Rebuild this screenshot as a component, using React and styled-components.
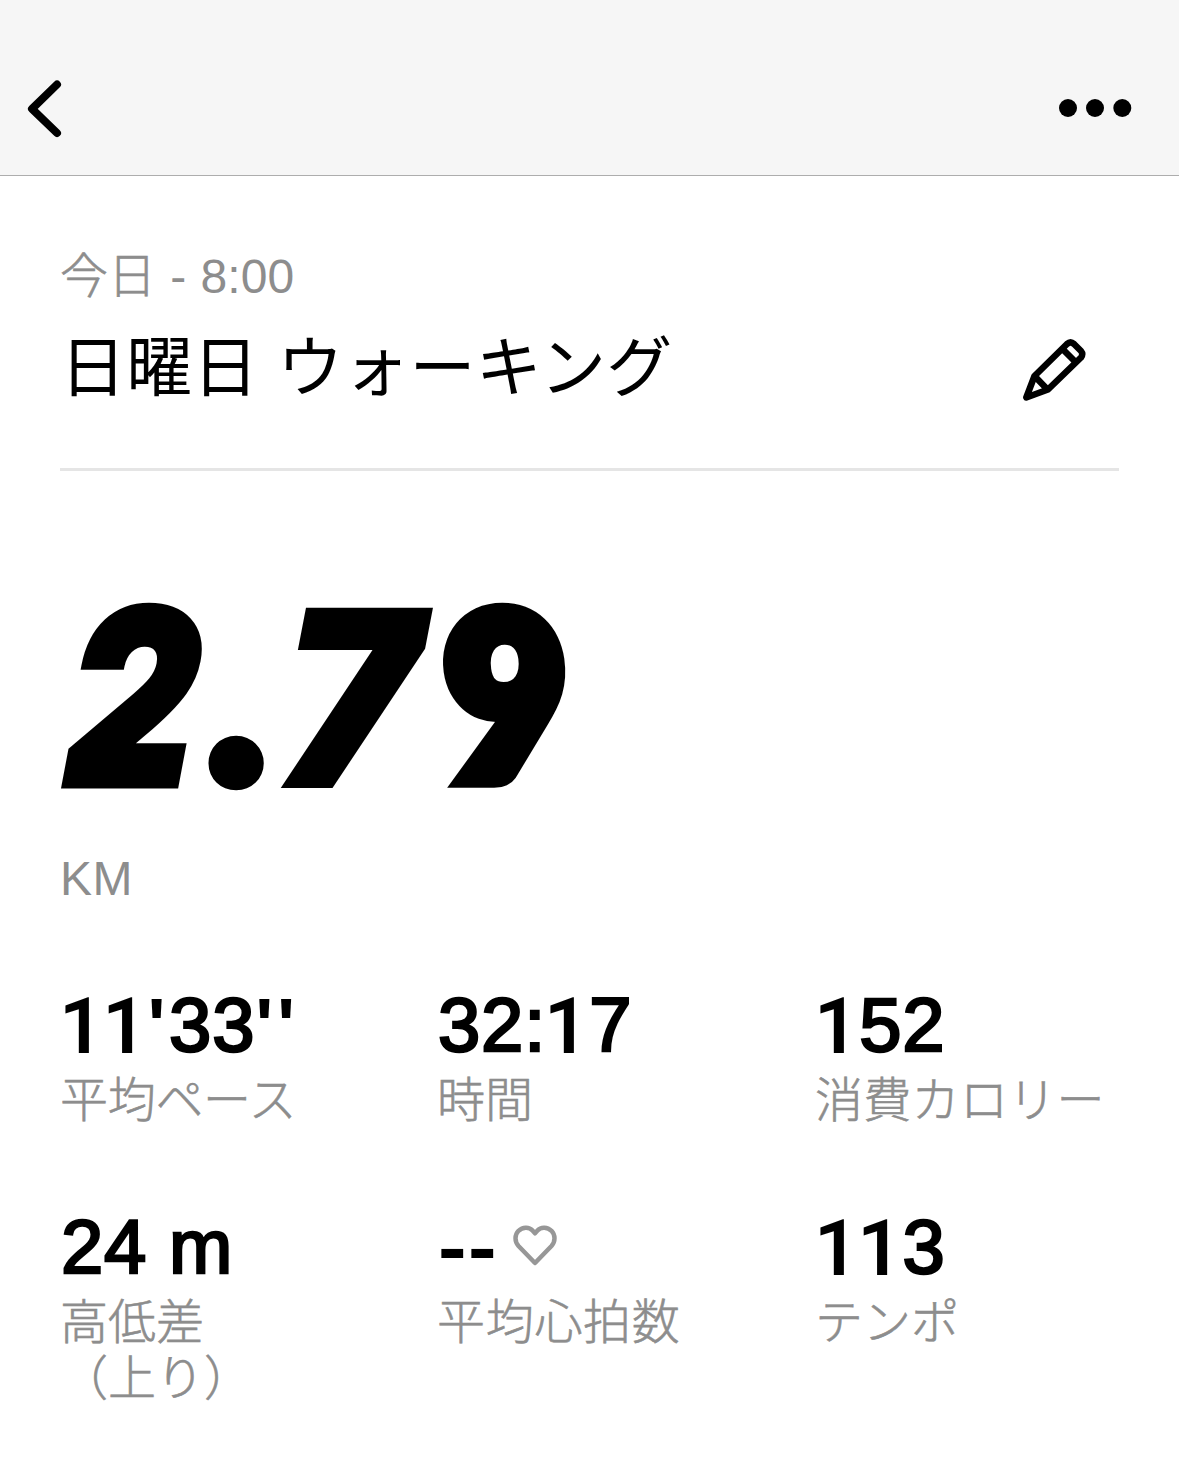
import styled, { createGlobalStyle } from "styled-components";

const GlobalStyle = createGlobalStyle`
  * {
    box-sizing: border-box;
  }

  body {
    margin: 0;
    background: #fff;
    color: #000;
    font-family: "Liberation Sans", "Noto Sans CJK JP", sans-serif;
  }
`;

const Screen = styled.div`
  width: 1179px;
  height: 1474px;
  overflow: hidden;
  background: #fff;
`;

const NavBar = styled.header`
  display: flex;
  justify-content: space-between;
  align-items: flex-start;
  height: 176px;
  padding: 78px 46px 0 26px;
  background: #f6f6f6;
  border-bottom: 1px solid #adadad;
`;

const IconButton = styled.button`
  display: flex;
  padding: 0;
  border: 0;
  background: none;
  color: #000;
`;

const Content = styled.main`
  padding: 69px 60px 0;
`;

const DateLine = styled.p`
  display: flex;
  margin: 0;
  height: 64px;
  line-height: 64px;
  font-size: 48px;
  font-weight: 300;
  color: #8d8d8d;
  white-space: pre;
`;

const Today = styled.span`
  -webkit-text-stroke: 0.6px #8d8d8d;
`;

const Time = styled.span`
  letter-spacing: 0.1px;
  word-spacing: 0.8px;
`;

const TitleRow = styled.div`
  display: flex;
  justify-content: space-between;
  align-items: center;
  height: 121px;
  padding-right: 32px;
`;

const Title = styled.h1`
  margin: 0 0 4px;
  font-size: 66px;
  line-height: 90px;
  font-weight: 400;
  letter-spacing: 0.2px;
  white-space: nowrap;
`;

const Divider = styled.hr`
  margin: 38px 0 0;
  height: 3px;
  border: 0;
  background: #e5e5e5;
`;

const Distance = styled.div`
  display: flex;
  height: 250px;
  margin-top: 100px;
  line-height: 250px;
  font-style: italic;
`;

const Glyph = styled.span`
  width: ${(props) => props.$width}px;
  font-family: ${(props) => props.$font || "Inter"}, sans-serif;
  font-size: ${(props) => props.$size || 240}px;
  font-weight: 900;
  transform: ${(props) => props.$transform || "none"};
  transform-origin: left 85%;
  -webkit-text-stroke: ${(props) => props.$stroke || 0}px #000;
`;

const Unit = styled.p`
  margin: 26px 0 0;
  height: 64px;
  line-height: 64px;
  font-size: 48px;
  letter-spacing: 0.5px;
  color: #8d8d8d;
`;

const Stats = styled.section`
  display: grid;
  grid-template-columns: 377px 378px 1fr;
  grid-auto-rows: 222px;
  margin-top: 69px;
`;

const Value = styled.div`
  display: flex;
  height: 93px;
  padding-left: 1px;
  line-height: 90px;
  font-size: 76px;
  letter-spacing: 0.8px;
  -webkit-text-stroke: 2.6px #000;
  white-space: pre;
`;

const One = styled.span`
  width: 43.2px;
  padding-top: 2px;
  text-indent: -2px;
  font-family: Roboto, sans-serif;
  font-size: 78px;
  font-weight: 600;
  letter-spacing: -2px;
  -webkit-text-stroke: 0;
`;

const Quote = styled.span`
  width: 21.7px;
  font-weight: 700;
  -webkit-text-stroke: 0;
`;

const Dash = styled.span`
  width: 30px;
  font-weight: 700;
  transform: scaleX(1.13);
  transform-origin: left;
  -webkit-text-stroke: 0;
`;

const Label = styled.div`
  font-size: 48px;
  line-height: 56px;
  font-weight: 300;
  color: #8d8d8d;
  letter-spacing: ${(props) => props.$spacing || 0}px;
  -webkit-text-stroke: 0.6px #8d8d8d;
  white-space: pre-line;
`;

const stats = [
  { value: "11'33''", label: "平均ペース", spacing: -0.3 },
  { value: "32:17", label: "時間" },
  { value: "152", label: "消費カロリー", spacing: 0.3 },
  { value: "24 m", label: "高低差\n（上り）" },
  { value: "--", label: "平均心拍数", heart: true, spacing: 0.7 },
  { value: "113", label: "テンポ" },
];

function BackIcon() {
  return (
    <svg width="38" height="62" viewBox="0 0 38 62" fill="none" stroke="currentColor">
      <path d="M31 6.500 6 30.800 31 55" strokeWidth="8" strokeLinecap="round" strokeLinejoin="round" />
    </svg>
  );
}

function MoreIcon() {
  return (
    <svg width="74" height="60" viewBox="0 0 74 60" fill="currentColor">
      <circle cx="9" cy="30" r="9" />
      <circle cx="36" cy="30" r="9" />
      <circle cx="63.300" cy="30" r="9" />
    </svg>
  );
}

function PencilIcon() {
  return (
    <svg width="66" height="66" viewBox="0 0 66 66" fill="none" stroke="currentColor" strokeWidth="6.500" strokeLinejoin="round">
      <path d="M5.300 60.500 13.500 39 46 7Q49.500 3.800 53 7L60 14Q62.500 17 60 20.500L27 52.500Z" />
      <path d="M41.500 12 54.500 25M13.500 39 26 52" />
    </svg>
  );
}

function HeartIcon() {
  return (
    <svg width="46" height="44" viewBox="0 0 46 44" fill="none" stroke="currentColor">
      <path
        d="M23 39 6.500 22C2.500 17.500 2.500 11 6.500 6.800 10.500 3 17 2.500 20.500 6.500L23 9.300 25.500 6.500C29 2.500 35.500 3 39.500 6.800 43.500 11 43.500 17.500 39.500 22Z"
        strokeWidth="4.500"
        strokeLinejoin="round"
      />
    </svg>
  );
}

const HeartSlot = styled.span`
  margin: 22px 0 0 14px;
  line-height: 0;
  color: #979797;
`;

function StatValue({ text }) {
  return [...text].map((char, index) => {
    if (char === "1") return <One key={index}>{char}</One>;
    if (char === "'") return <Quote key={index}>{char}</Quote>;
    if (char === "-") return <Dash key={index}>{char}</Dash>;
    return <span key={index}>{char}</span>;
  });
}

export default function App() {
  return (
    <Screen>
      <GlobalStyle />
      <NavBar>
        <IconButton aria-label="戻る">
          <BackIcon />
        </IconButton>
        <IconButton aria-label="メニュー">
          <MoreIcon />
        </IconButton>
      </NavBar>
      <Content>
        <DateLine>
          <Today>今日</Today>
          <Time> - 8:00</Time>
        </DateLine>
        <TitleRow>
          <Title>日曜日 ウォーキング</Title>
          <IconButton aria-label="編集">
            <PencilIcon />
          </IconButton>
        </TitleRow>
        <Divider />
        <Distance>
          <Glyph $width={145} $stroke={7} $transform="translate(4px, 2px) skewX(-3deg) scale(0.83, 1.01)">2</Glyph>
          <Glyph $width={73} $font="Lato" $size={260} $stroke={13} $transform="translate(7px, -15px)">.</Glyph>
          <Glyph $width={155} $stroke={4} $transform="translate(0px, 3px) skewX(-2deg) scale(0.95, 1.01)">7</Glyph>
          <Glyph $width={145} $font="Lato" $stroke={18} $size={233} $transform="translate(17px, -7px) skewX(8deg) scale(0.97, 0.98)">9</Glyph>
        </Distance>
        <Unit>KM</Unit>
        <Stats>
          {stats.map((stat) => (
            <div key={stat.label}>
              <Value>
                <StatValue text={stat.value} />
                {stat.heart && (
                  <HeartSlot>
                    <HeartIcon />
                  </HeartSlot>
                )}
              </Value>
              <Label $spacing={stat.spacing}>{stat.label}</Label>
            </div>
          ))}
        </Stats>
      </Content>
    </Screen>
  );
}
